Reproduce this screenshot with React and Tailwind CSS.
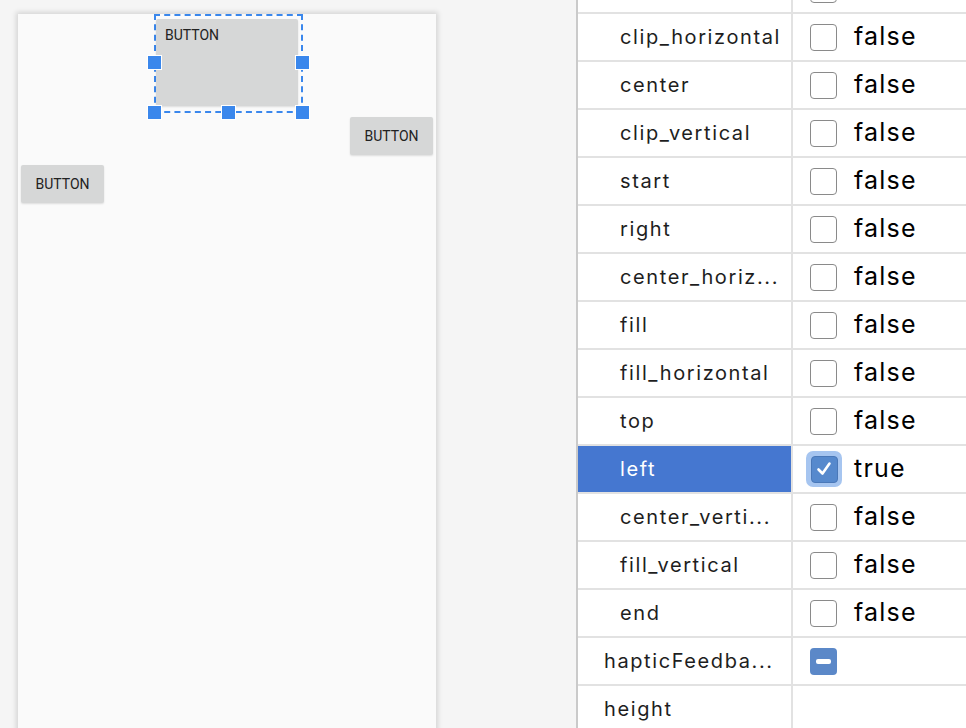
import React from "react";

const rows = [
  { label: "", v: "false", partial: true },
  { label: "clip_horizontal", v: "false" },
  { label: "center", v: "false" },
  { label: "clip_vertical", v: "false" },
  { label: "start", v: "false" },
  { label: "right", v: "false" },
  { label: "center_horiz...", v: "false" },
  { label: "fill", v: "false" },
  { label: "fill_horizontal", v: "false" },
  { label: "top", v: "false" },
  { label: "left", v: "true", selected: true },
  { label: "center_verti...", v: "false" },
  { label: "fill_vertical", v: "false" },
  { label: "end", v: "false" },
  { label: "hapticFeedba...", v: "indeterminate", outdent: true },
  { label: "height", v: "none", outdent: true },
];

function Box({ v }) {
  if (v === "none") return null;
  if (v === "indeterminate") {
    return (
      <div className="w-[27px] h-[27px] rounded-[4px] bg-[#5b88c8] flex items-center justify-center">
        <div className="w-[15px] h-[5px] rounded-[2px] bg-white" />
      </div>
    );
  }
  if (v === "true") {
    return (
      <div className="w-[36px] h-[36px] -ml-[4px] -mr-[5px] rounded-[7px] bg-[#a6c5f0] flex items-center justify-center">
        <div className="w-[27px] h-[27px] rounded-[4px] bg-[#5689cd] border border-[#4a78b8] flex items-center justify-center">
          <svg width="18" height="18" viewBox="0 0 18 18">
            <path d="M3.5 9.5 L7.5 13.5 L14.5 3.5" fill="none" stroke="white" strokeWidth="2.6" strokeLinecap="round" strokeLinejoin="round" />
          </svg>
        </div>
      </div>
    );
  }
  return <div className="w-[27px] h-[27px] rounded-[4px] border-[1.5px] border-[#8a8a8a] bg-white" />;
}

function Handle({ className }) {
  return <div className={"absolute w-[15px] h-[15px] bg-[#3a87ec] border border-white " + className} />;
}

function Btn({ className, children }) {
  return (
    <div
      className={
        "absolute bg-[#d6d7d7] rounded-[2px] shadow-[0_1px_2px_rgba(0,0,0,0.12)] text-[14px] text-[#222] font-normal " +
        className
      }
      style={{ fontFamily: "Roboto, 'Liberation Sans', sans-serif" }}
    >
      {children}
    </div>
  );
}

export default function App() {
  return (
    <div className="w-[966px] h-[728px] overflow-hidden flex bg-[#f5f5f5]">
      <div className="w-[576px] h-full pl-[18px] pt-[14px]">
        <div className="relative w-[418px] h-[800px] bg-[#fafafa] shadow-[0_0_5px_2px_rgba(0,0,0,0.13)]">
          <div className="absolute left-[136px] top-0 w-[149px] h-[99px] border-2 border-dashed border-[#3a87ec]" />
          <Btn className="left-[138px] top-[5px] w-[142px] h-[87px] pl-[9px] pt-[8px] leading-[16px]">BUTTON</Btn>
          <Handle className="left-[129px] top-[41px]" />
          <Handle className="left-[277px] top-[41px]" />
          <Handle className="left-[129px] top-[91px]" />
          <Handle className="left-[203px] top-[91px]" />
          <Handle className="left-[277px] top-[91px]" />
          <Btn className="left-[332px] top-[103px] w-[83px] h-[38px] flex items-center justify-center">BUTTON</Btn>
          <Btn className="left-[3px] top-[151px] w-[83px] h-[38px] flex items-center justify-center">BUTTON</Btn>
        </div>
      </div>
      <div
        className="flex-1 h-full bg-white border-l-2 border-[#cacaca] overflow-hidden"
        style={{ fontFamily: "Inter, 'Liberation Sans', sans-serif" }}
      >
        <div className="-mt-[34px]">
          {rows.map((r, i) => (
            <div key={i} className="flex h-[48px] border-b-2 border-[#e2e2e2]">
              <div
                className={
                  "w-[215px] shrink-0 flex items-center border-r-2 border-[#e2e2e2] text-[20px] tracking-[1.6px] " +
                  (r.selected ? "bg-[#4577d0] text-white " : "text-[#1e1e1e] ") +
                  (r.outdent ? "pl-[26px]" : "pl-[42px]")
                }
              >
                {r.label}
              </div>
              <div className="flex items-center pl-[17px] gap-[17px] text-[25px] text-black tracking-[1.2px]">
                <Box v={r.v} />
                {!r.partial && (r.v === "true" || r.v === "false") ? <span>{r.v}</span> : null}
              </div>
            </div>
          ))}
        </div>
      </div>
    </div>
  );
}
